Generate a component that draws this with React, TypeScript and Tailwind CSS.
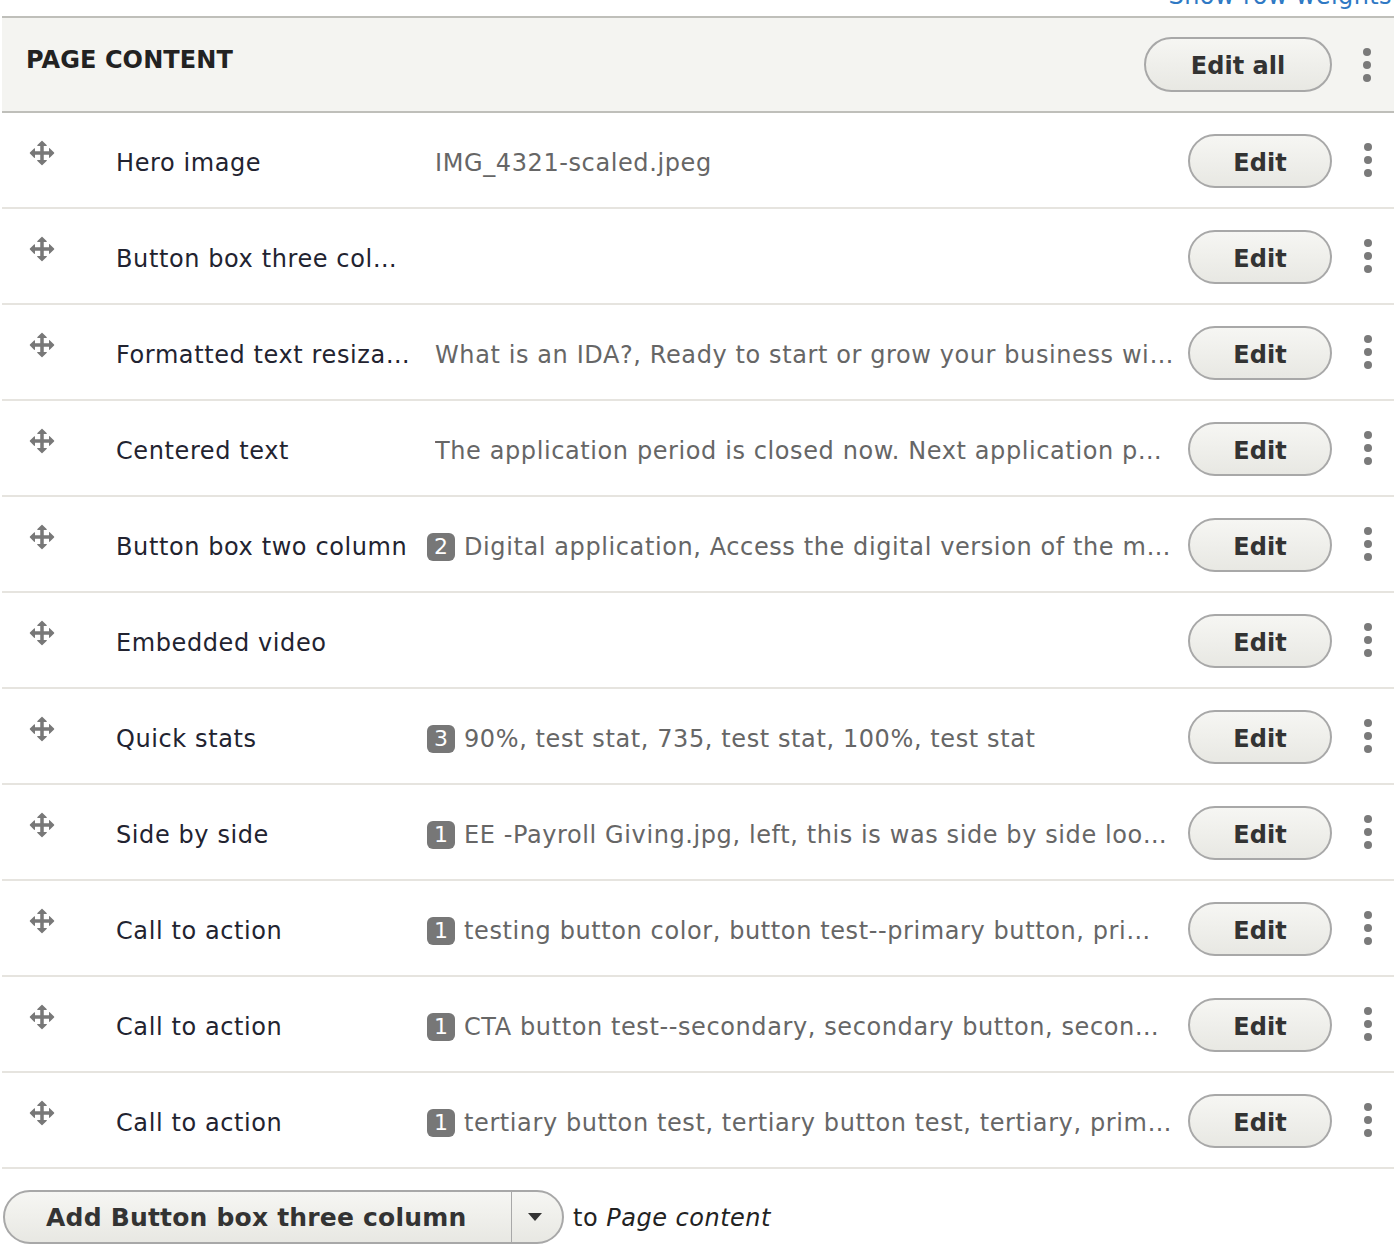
import React from "react";

type Row = {
  label: string;
  summary?: string;
  count?: number;
};

const rows: Row[] = [
  { label: "Hero image", summary: "IMG_4321-scaled.jpeg" },
  { label: "Button box three col…" },
  {
    label: "Formatted text resiza…",
    summary: "What is an IDA?, Ready to start or grow your business wi…",
  },
  {
    label: "Centered text",
    summary: "The application period is closed now. Next application p…",
  },
  {
    label: "Button box two column",
    count: 2,
    summary: "Digital application, Access the digital version of the m…",
  },
  { label: "Embedded video" },
  { label: "Quick stats", count: 3, summary: "90%, test stat, 735, test stat, 100%, test stat" },
  {
    label: "Side by side",
    count: 1,
    summary: "EE -Payroll Giving.jpg, left, this is was side by side loo…",
  },
  {
    label: "Call to action",
    count: 1,
    summary: "testing button color, button test--primary button, pri…",
  },
  {
    label: "Call to action",
    count: 1,
    summary: "CTA button test--secondary, secondary button, secon…",
  },
  {
    label: "Call to action",
    count: 1,
    summary: "tertiary button test, tertiary button test, tertiary, prim…",
  },
];

const font = "font-['DejaVu_Sans',_'Liberation_Sans',_sans-serif]";

function MoveIcon() {
  return (
    <svg className="h-[28px] w-[28px]" viewBox="0 0 16 16">
      <path
        fill="#787878"
        d="M14.904 7.753l-2.373-2.372c-.291-.292-.529-.193-.529.22v1.399h-3v-3h1.398c.414 0 .512-.239.221-.53l-2.371-2.372c-.137-.136-.36-.136-.497 0l-2.372 2.372c-.292.292-.193.53.22.53h1.399v3h-3v-1.369c0-.413-.239-.511-.53-.22l-2.372 2.372c-.136.136-.136.359 0 .494l2.372 2.372c.291.292.53.192.53-.219v-1.43h3v3h-1.4c-.413 0-.511.238-.22.529l2.374 2.373c.137.137.36.137.495 0l2.373-2.373c.29-.291.19-.529-.222-.529h-1.398v-3h3v1.4c0 .412.238.511.529.219l2.373-2.371c.137-.137.137-.359 0-.495z"
      />
    </svg>
  );
}

function Kebab() {
  return (
    <div className="flex flex-col gap-[5px]">
      <span className="h-[8px] w-[8px] rounded-full bg-[#7a7a7a]" />
      <span className="h-[8px] w-[8px] rounded-full bg-[#7a7a7a]" />
      <span className="h-[8px] w-[8px] rounded-full bg-[#7a7a7a]" />
    </div>
  );
}

function PillButton({ children, className }: { children: React.ReactNode; className?: string }) {
  return (
    <button
      className={`flex items-center justify-center rounded-full border-2 border-[#a8a8a8] bg-gradient-to-b from-[#f6f6f3] to-[#e8e8e3] pt-[3px] text-[24px] font-bold text-[#333] ${className ?? ""}`}
    >
      {children}
    </button>
  );
}

export default function App() {
  return (
    <div className={`w-[1400px] bg-white ${font}`}>
      {/* tabledrag weight toggle, scrolled mostly out of view */}
      <div className="flex h-[16px] justify-end overflow-hidden pr-[8px]">
        <a href="#" className="-mt-[20px] text-[24px] leading-[32px] tracking-[0.4px] text-[#2f79c4]">
          Show row weights
        </a>
      </div>

      <div className="ml-[2px] w-[1392px]">
        {/* header */}
        <div className="flex h-[97px] items-center border-y-2 border-[#bfbfba] bg-[#f4f4f1]">
          <h2 className="-mt-[10px] flex-1 pl-[24px] text-[24px] font-bold tracking-[0.1px] text-[#222]">
            PAGE CONTENT
          </h2>
          <PillButton className="h-[55px] w-[188px]">Edit all</PillButton>
          <div className="flex w-[62px] justify-center pl-[8px]">
            <Kebab />
          </div>
        </div>

        {rows.map((row, i) => (
          <div key={i} className="flex h-[96px] items-center border-b-2 border-[#e6e4df]">
            <div className="w-[114px] self-start pl-[26px] pt-[26px]">
              <MoveIcon />
            </div>
            <div className="w-[311px] truncate pr-[8px] pt-[5px] text-[24px] tracking-[0.6px] text-[#222330]">
              {row.label}
            </div>
            <div className="flex min-w-0 flex-1 items-center pt-[5px] text-[24px] tracking-[0.6px] text-[#666]">
              {row.count !== undefined ? (
                <span className="mr-[9px] flex h-[28px] w-[28px] shrink-0 items-center justify-center rounded-[6px] bg-[#777] text-[22px] leading-none tracking-normal text-white">
                  {row.count}
                </span>
              ) : (
                <span className="w-[8px] shrink-0" />
              )}
              <span className="truncate">{row.summary}</span>
            </div>
            <PillButton className="ml-[14px] mt-[2px] h-[54px] w-[144px] shrink-0">Edit</PillButton>
            <div className="flex w-[62px] shrink-0 justify-center pl-[10px]">
              <Kebab />
            </div>
          </div>
        ))}
      </div>

      {/* add component dropbutton */}
      <div className="mt-[21px] flex items-center pl-[3px]">
        <div className="flex h-[54px] w-[561px] items-stretch rounded-full border-2 border-[#a8a8a8] bg-gradient-to-b from-[#f6f6f3] to-[#e8e8e3] text-[#333]">
          <span className="flex flex-1 items-center pl-[41px] pt-[2px] text-[25px] font-bold tracking-[0.2px]">
            Add Button box three column
          </span>
          <span className="flex w-[51px] items-center justify-center border-l border-[#a8a8a8] pr-[4px]">
            <svg width="14" height="8" viewBox="0 0 14 8">
              <path d="M0 0h14L7 8z" fill="#333" />
            </svg>
          </span>
        </div>
        <span className="ml-[9px] pt-[2px] text-[24px] tracking-[0.5px] text-[#222]">
          to <em>Page content</em>
        </span>
      </div>
    </div>
  );
}
